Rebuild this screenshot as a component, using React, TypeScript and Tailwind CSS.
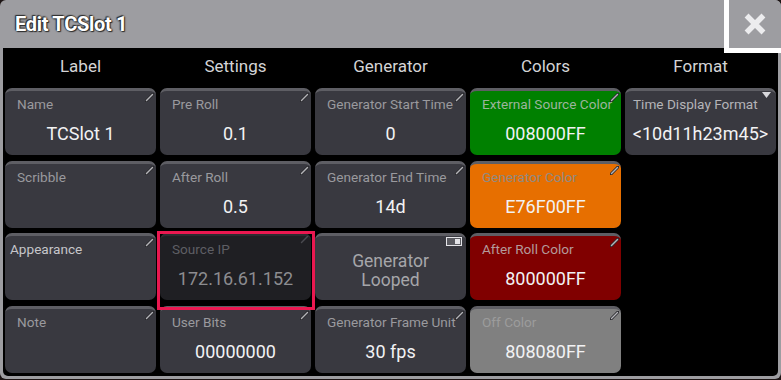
import React from 'react'

type Cell = {
  label?: string
  value?: string
  bg?: string
  labelClass?: string
  valueClass?: string
  corner?: 'pencil' | 'triangle' | 'toggle' | 'none'
  kind?: 'normal' | 'center' | 'empty' | 'selected'
}

function Pencil() {
  return (
    <svg width="9" height="9" viewBox="0 0 9 9" className="absolute right-[2px] top-[2px]">
      <line x1="1" y1="8" x2="8" y2="1" stroke="#2a2a2e" strokeWidth="3" strokeLinecap="round" />
      <line x1="1.5" y1="7.5" x2="7.5" y2="1.5" stroke="#b4b4b8" strokeWidth="1.4" strokeLinecap="round" />
    </svg>
  )
}

function Triangle() {
  return (
    <svg width="9" height="7" viewBox="0 0 9 7" className="absolute right-[5px] top-[1px]">
      <polygon points="0,0 9,0 4.5,6" fill="#d8d8dc" />
    </svg>
  )
}

function Toggle() {
  return (
    <svg width="16" height="9" viewBox="0 0 16 9" className="absolute right-[4px] top-[1px]">
      <rect x="0.5" y="0.5" width="15" height="8" fill="#5a5a60" stroke="#e4e4e8" strokeWidth="1" />
      <rect x="9" y="2" width="5" height="5" fill="#e4e4e8" />
    </svg>
  )
}

function GridCell({ c }: { c: Cell }) {
  if (c.kind === 'empty') return <div />
  const bg = c.bg ?? 'bg-[#393940]'
  const corner = c.corner ?? 'pencil'
  return (
    <div className={`relative rounded-[7px] border-t-[3px] border-[#5e5e64] ${bg} overflow-hidden`}>
      {corner === 'pencil' && <Pencil />}
      {corner === 'triangle' && <Triangle />}
      {corner === 'toggle' && <Toggle />}
      {c.kind === 'center' ? (
        <div className={`flex h-full flex-col items-center justify-center pt-[6px] text-[17.5px] leading-[19px] ${c.valueClass ?? 'text-[#a6a6aa]'}`}>
          {c.value?.split('\n').map(l => <span key={l}>{l}</span>)}
        </div>
      ) : (
        <>
          <div className={`mt-[5px] whitespace-nowrap text-[13.6px] leading-[16px] ${c.labelClass ?? 'pl-[12px] text-[#9a9a9e]'}`}>{c.label}</div>
          {c.value && (
            <div className={`mt-[12px] text-center text-[18px] leading-[20px] whitespace-nowrap ${c.valueClass ?? 'text-[#f2f2f4]'}`}>
              {c.value}
            </div>
          )}
        </>
      )}
    </div>
  )
}

const headers = ['Label', 'Settings', 'Generator', 'Colors', 'Format']

const cells: Cell[] = [
  { label: 'Name', value: 'TCSlot 1' },
  { label: 'Pre Roll', value: '0.1' },
  { label: 'Generator Start Time', value: '0' },
  { label: 'External Source Color', value: '008000FF', bg: 'bg-[#008000]', labelClass: 'pl-[12px] text-[#9cb49c]' },
  { label: 'Time Display Format', value: '<10d11h23m45>', corner: 'triangle', labelClass: 'pl-[8px] text-[#b4b4b8]' },

  { label: 'Scribble' },
  { label: 'After Roll', value: '0.5' },
  { label: 'Generator End Time', value: '14d' },
  { label: 'Generator Color', value: 'E76F00FF', bg: 'bg-[#e76f00]', labelClass: 'pl-[12px] text-[#8f8a80]' },
  { kind: 'empty' },

  { label: 'Appearance', labelClass: 'pl-[5px] text-[#c6c6ca]' },
  { kind: 'selected' },
  { kind: 'center', value: 'Generator\nLooped', corner: 'toggle' },
  { label: 'After Roll Color', value: '800000FF', bg: 'bg-[#800000]', labelClass: 'pl-[12px] text-[#b49a9a]' },
  { kind: 'empty' },

  { label: 'Note' },
  { label: 'User Bits', value: '00000000' },
  { label: 'Generator Frame Unit', value: '30 fps' },
  { label: 'Off Color', value: '808080FF', bg: 'bg-[#808080]', labelClass: 'pl-[12px] text-[#9c9c9c]' },
  { kind: 'empty' },
]

function SourceIp() {
  return (
    <div className="relative">
      <div className="h-full rounded-[7px] border-t-[3px] border-[#2c2c30] bg-[#1f1f23]">
        <svg width="9" height="9" viewBox="0 0 9 9" className="absolute right-[2px] top-[2px]">
          <line x1="1.5" y1="7.5" x2="7.5" y2="1.5" stroke="#4a4a50" strokeWidth="1.4" strokeLinecap="round" />
        </svg>
        <div className="mt-[5px] pl-[12px] text-[13.6px] leading-[16px] text-[#5e5e64]">Source IP</div>
        <div className="mt-[12px] text-center text-[18px] leading-[20px] text-[#8c8c90]">172.16.61.152</div>
      </div>
      <div className="pointer-events-none absolute left-[-3px] top-[-2px] z-10 h-[79px] w-[158px] border-[3px] border-[#ea1850]" />
    </div>
  )
}

export default function App() {
  return (
    <div className="h-[380px] w-[781px] bg-[#1c1414] font-['Roboto',sans-serif]">
      <div className="relative flex h-[379px] flex-col rounded-[6px] bg-[#9d9da1] px-[3px] pb-[3px]">
        <div className="flex h-[48px] items-center pl-[12px]">
          <span className="text-[20px] font-bold tracking-[-0.3px] text-white [text-shadow:0_0_2px_#222,0_0_1px_#222,1px_1px_1px_#333,-1px_-1px_1px_#333]">
            Edit TCSlot 1
          </span>
        </div>
        <div className="absolute right-0 top-0 z-20 flex h-[53px] w-[57px] items-center justify-center rounded-tr-[6px] border-b-[5px] border-l-[5px] border-white bg-[#9d9da1]">
          <svg width="24" height="24" viewBox="0 0 24 24">
            <path d="M5.5 5.5 L18.5 18.5 M18.5 5.5 L5.5 18.5" stroke="#ececee" strokeWidth="5.5" strokeLinecap="square" strokeLinejoin="round" />
          </svg>
        </div>
        <div className="flex flex-1 flex-col rounded-b-[5px] bg-black px-[2px] pb-[3px]">
          <div className="grid h-[38px] grid-cols-5 gap-x-[4px]">
            {headers.map(h => (
              <div key={h} className="flex items-center justify-center text-[17px] text-[#d4d4d6]">
                {h}
              </div>
            ))}
          </div>
          <div className="mt-[2px] grid auto-rows-[67px] grid-cols-5 gap-x-[4px] gap-y-[5.67px]">
            {cells.map((c, i) =>
              c.kind === 'selected' ? <SourceIp key={i} /> : <GridCell key={i} c={c} />
            )}
          </div>
        </div>
      </div>
    </div>
  )
}
